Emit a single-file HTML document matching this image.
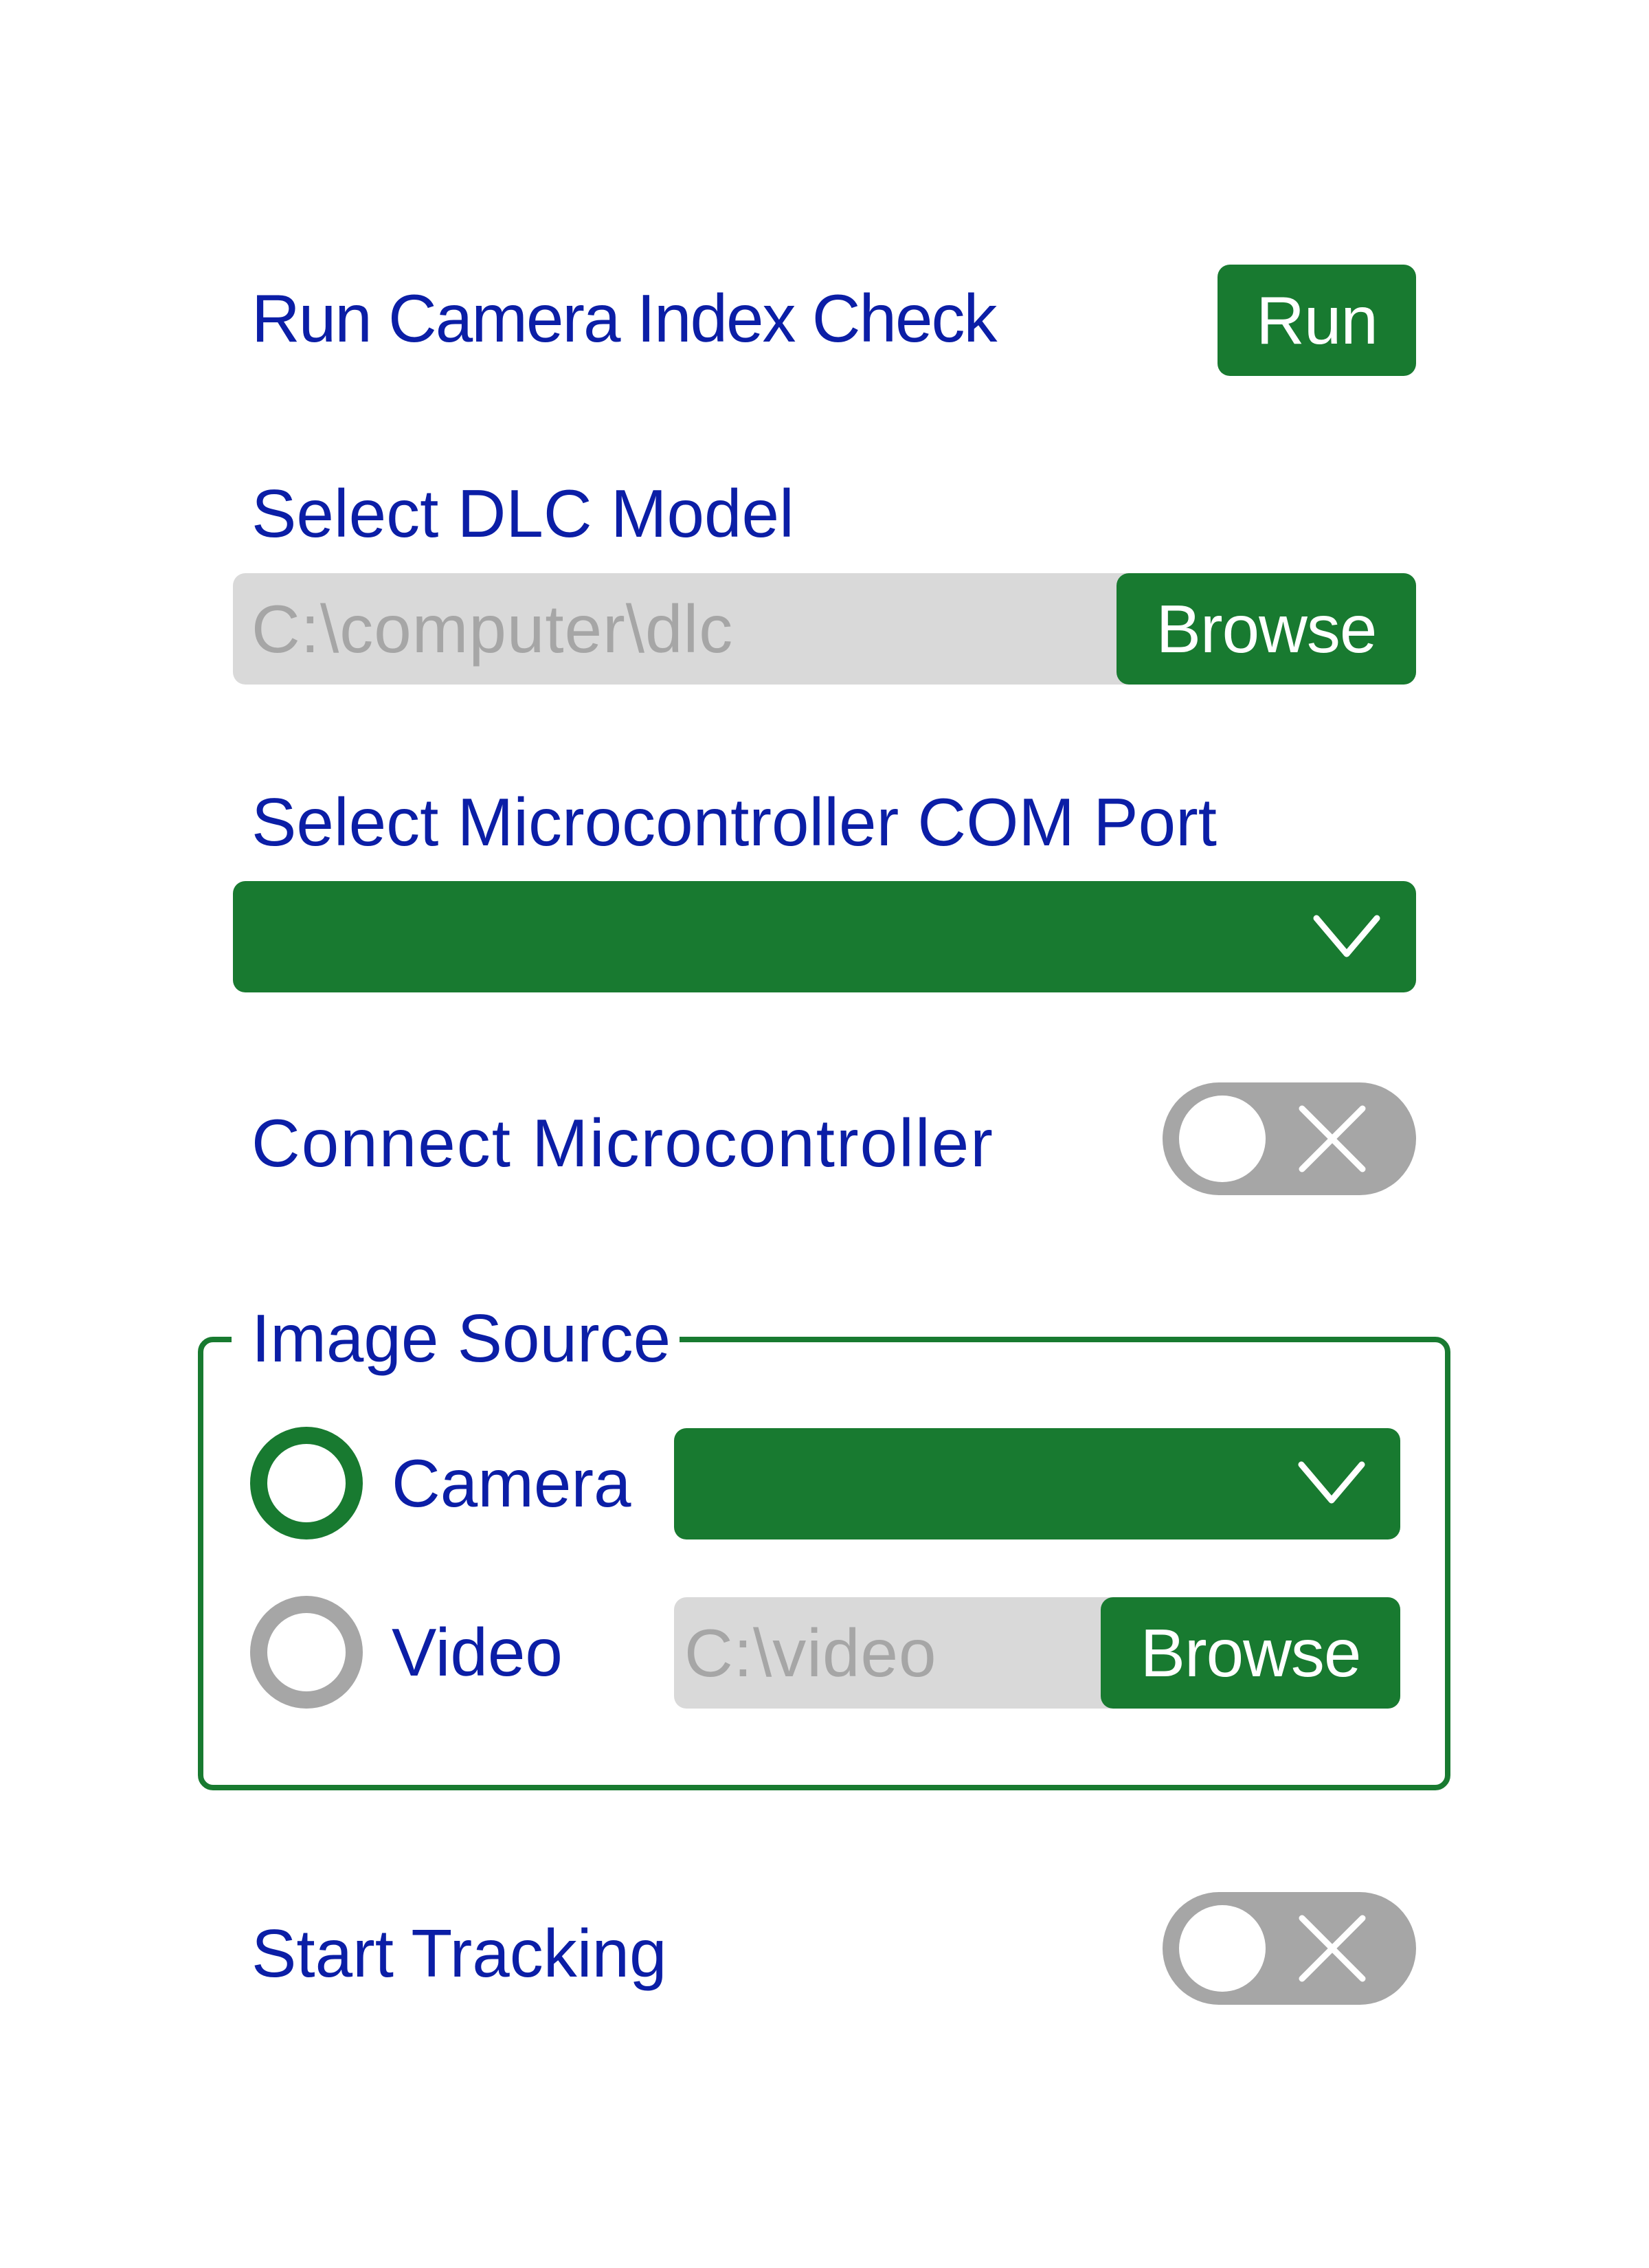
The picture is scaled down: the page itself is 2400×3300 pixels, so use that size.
<!DOCTYPE html>
<html><head><meta charset="utf-8"><style>
*{margin:0;padding:0;box-sizing:border-box}
body{width:2400px;height:3300px;background:#fff;position:relative;overflow:hidden;font-family:"Liberation Sans",sans-serif}
.a{position:absolute}
.lbl{position:absolute;color:#0b1ea6;font-size:98px;line-height:160px;height:160px;white-space:nowrap;letter-spacing:0px}
.g{background:#187a30}
.btxt{color:#fff;font-size:98px;text-align:center;letter-spacing:-1px}
.ph{color:#a6a6a6;font-size:98px;letter-spacing:1px}
</style></head><body>

<div class="lbl" style="left:366px;top:383px;letter-spacing:-2px">Run Camera Index Check</div>
<div class="a g btxt" style="left:1772px;top:385px;width:289px;height:162px;border-radius:18px;line-height:162px">Run</div>

<div class="lbl" style="left:366px;top:667px">Select DLC Model</div>
<div class="a" style="left:339px;top:834px;width:1722px;height:162px;border-radius:18px;background:#d9d9d9"></div>
<div class="a ph" style="left:366px;top:834px;line-height:162px">C:\computer\dlc</div>
<div class="a g btxt" style="left:1625px;top:834px;width:436px;height:162px;border-radius:18px;line-height:162px">Browse</div>

<div class="lbl" style="left:366px;top:1116px">Select Microcontroller COM Port</div>
<div class="a g" style="left:339px;top:1282px;width:1722px;height:162px;border-radius:18px"></div>
<svg class="a" style="left:1900px;top:1320px" width="120" height="90"><path d="M16 16 L60 68 L104 16" fill="none" stroke="#fff" stroke-width="9" stroke-linecap="round" stroke-linejoin="round"/></svg>

<div class="lbl" style="left:366px;top:1583px;letter-spacing:2px">Connect Microcontroller</div>
<div class="a" style="left:1692px;top:1575px;width:369px;height:164px;border-radius:82px;background:#a6a6a6"></div>
<div class="a" style="left:1716px;top:1594px;width:126px;height:126px;border-radius:50%;background:#fff"></div>
<svg class="a" style="left:1889px;top:1607px" width="100" height="100"><path d="M6 6 L94 94 M94 6 L6 94" stroke="#fff" stroke-width="9" stroke-linecap="round"/></svg>

<div class="a" style="left:288px;top:1945px;width:1823px;height:660px;border:8px solid #187a30;border-radius:22px"></div>
<div class="a" style="left:337px;top:1920px;width:652px;height:60px;background:#fff"></div>
<div class="lbl" style="left:366px;top:1867px">Image Source</div>

<div class="a" style="left:364px;top:2076px;width:164px;height:164px;border-radius:50%;border:25px solid #187a30"></div>
<div class="lbl" style="left:570px;top:2078px">Camera</div>
<div class="a g" style="left:981px;top:2078px;width:1057px;height:162px;border-radius:18px"></div>
<svg class="a" style="left:1878px;top:2115px" width="120" height="90"><path d="M16 16 L60 68 L104 16" fill="none" stroke="#fff" stroke-width="9" stroke-linecap="round" stroke-linejoin="round"/></svg>

<div class="a" style="left:364px;top:2322px;width:164px;height:164px;border-radius:50%;border:25px solid #a6a6a6"></div>
<div class="lbl" style="left:570px;top:2324px">Video</div>
<div class="a" style="left:981px;top:2324px;width:1057px;height:162px;border-radius:18px;background:#d9d9d9"></div>
<div class="a ph" style="left:996px;top:2324px;line-height:162px">C:\video</div>
<div class="a g btxt" style="left:1602px;top:2324px;width:436px;height:162px;border-radius:18px;line-height:162px">Browse</div>

<div class="lbl" style="left:366px;top:2762px">Start Tracking</div>
<div class="a" style="left:1692px;top:2753px;width:369px;height:164px;border-radius:82px;background:#a6a6a6"></div>
<div class="a" style="left:1716px;top:2772px;width:126px;height:126px;border-radius:50%;background:#fff"></div>
<svg class="a" style="left:1889px;top:2785px" width="100" height="100"><path d="M6 6 L94 94 M94 6 L6 94" stroke="#fff" stroke-width="9" stroke-linecap="round"/></svg>

</body></html>
